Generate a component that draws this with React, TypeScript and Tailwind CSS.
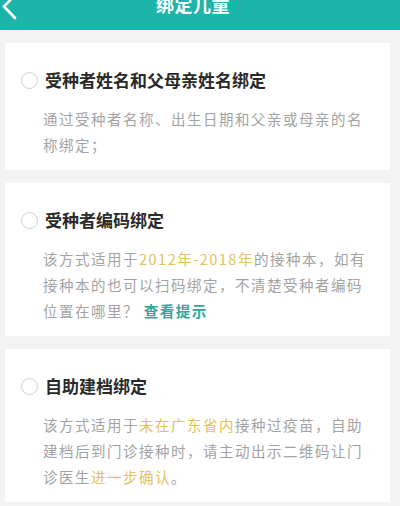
import React from "react";

const font = { fontFamily: '"Noto Sans CJK SC", "Noto Sans", sans-serif' };

function Radio() {
  return <span className="block w-[17px] h-[17px] rounded-full border-[1.5px] border-[#d0d0d0] bg-white shrink-0" />;
}

function Card({ title, lines }: { title: string; lines: React.ReactNode[] }) {
  return (
    <div className="bg-white ml-[5px] mr-[10px] pt-[28px] pb-[12px]">
      <div className="flex items-center h-[18px] pl-[16px] gap-[7px]">
        <Radio />
        <span className="text-[17px] leading-[18px] font-bold text-[#2a2a2a]">{title}</span>
      </div>
      <div className="mt-[17px] pl-[38px] text-[14.5px] leading-[26px] tracking-[1.5px] text-[#a3a3a3]">
        {lines.map((l, i) => (
          <div key={i} className="whitespace-nowrap">{l}</div>
        ))}
      </div>
    </div>
  );
}

export default function App() {
  const y = "text-[#e2c25e]";
  return (
    <div className="w-[400px] h-[506px] bg-[#f3f3f3] overflow-hidden" style={font}>
      <div className="relative h-[30px] bg-[#1db4a9] overflow-hidden flex justify-center pr-[14px]">
        <svg className="absolute left-0 top-0" width="20" height="22" viewBox="0 0 20 22">
          <polyline points="15,-5 4,6.5 15,18" fill="none" stroke="white" strokeWidth="2.6" strokeLinecap="round" strokeLinejoin="round" />
        </svg>
        <span className="text-[18px] font-bold text-white leading-[20px] -mt-[6px] tracking-[0.5px]">绑定儿童</span>
      </div>
      <div className="flex flex-col gap-[13px] pt-[13px]">
        <Card
          title="受种者姓名和父母亲姓名绑定"
          lines={["通过受种者名称、出生日期和父亲或母亲的名", "称绑定；"]}
        />
        <Card
          title="受种者编码绑定"
          lines={[
            <>该方式适用于<span className={y}>2012年-2018年</span>的接种本，如有</>,
            "接种本的也可以扫码绑定，不清楚受种者编码",
            <>位置在哪里？ <span className="text-[#2aa89b] font-semibold">查看提示</span></>,
          ]}
        />
        <Card
          title="自助建档绑定"
          lines={[
            <>该方式适用于<span className={y}>未在广东省内</span>接种过疫苗，自助</>,
            "建档后到门诊接种时，请主动出示二维码让门",
            <>诊医生<span className={y}>进一步确认</span>。</>,
          ]}
        />
      </div>
    </div>
  );
}
